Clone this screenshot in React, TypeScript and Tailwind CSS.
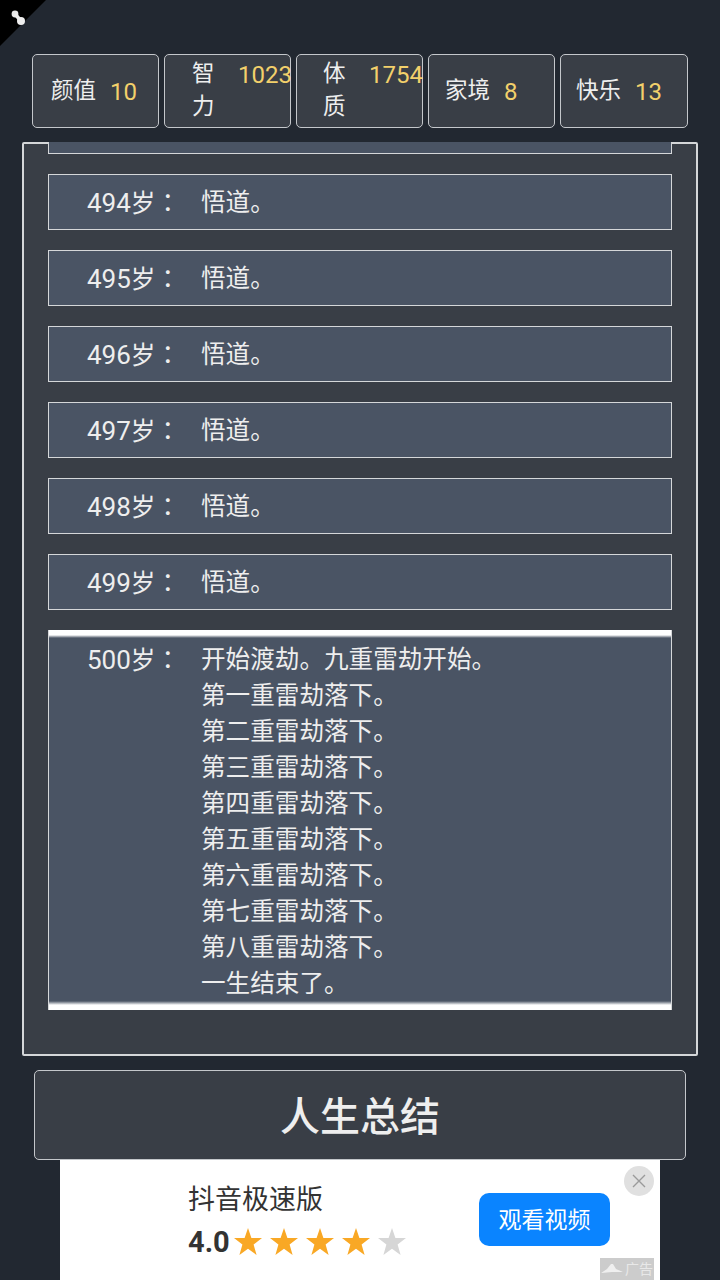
const font = { fontFamily: '"Roboto", "Noto Sans CJK SC", sans-serif' };

const stats = [
  { label: "颜值", value: "10", box: "pl-[18px] w-[127px]", labelCls: "w-[45px]", gap: "ml-[14px]" },
  { label: "智力", value: "1023", box: "pl-[27px] w-[127px]", labelCls: "w-[24px]", gap: "ml-[22px]" },
  { label: "体质", value: "1754", box: "pl-[26px] w-[127px]", labelCls: "w-[24px]", gap: "ml-[22px]" },
  { label: "家境", value: "8", box: "pl-[16px] w-[127px]", labelCls: "w-[45px]", gap: "ml-[14px]" },
  { label: "快乐", value: "13", box: "pl-[15px] w-[128px]", labelCls: "w-[45px]", gap: "ml-[14px]" },
];

const ages = [494, 495, 496, 497, 498, 499];

const lastLines = [
  "开始渡劫。九重雷劫开始。",
  "第一重雷劫落下。",
  "第二重雷劫落下。",
  "第三重雷劫落下。",
  "第四重雷劫落下。",
  "第五重雷劫落下。",
  "第六重雷劫落下。",
  "第七重雷劫落下。",
  "第八重雷劫落下。",
  "一生结束了。",
];

function Age({ age }: { age: number }) {
  return (
    <span className="ml-[38px] w-[114px] shrink-0 text-[24.6px]">
      <span className="text-[26px]">{age}</span>岁
      <span className="font-['Noto_Sans_CJK_TC']">：</span>
    </span>
  );
}

function Star({ on }: { on: boolean }) {
  return (
    <svg viewBox="0 0 28 27" className="h-[27px] w-[28px] shrink-0">
      <polygon
        points="14,0 17.4,9.9 28,10.1 19.6,16.6 22.6,27 14,20.8 5.4,27 8.4,16.6 0,10.1 10.6,9.9"
        fill={on ? "#f9a825" : "#d6d6d6"}
      />
    </svg>
  );
}

export default function App() {
  return (
    <div style={font} className="relative flex h-[1280px] w-[720px] flex-col overflow-hidden bg-[#222831] text-[#eeeeee]">
      {/* corner badge */}
      <div className="absolute left-0 top-0">
        <svg width="46" height="46" viewBox="0 0 46 46">
          <polygon points="0,0 46,0 0,46" fill="#000000" />
          <circle cx="15" cy="14" r="3.4" fill="#e8e8e8" />
          <circle cx="21" cy="21" r="4" fill="#eeeeee" />
          <line x1="15" y1="14" x2="21" y2="21" stroke="#eeeeee" strokeWidth="3.5" />
        </svg>
      </div>

      <div className="ml-[32px] mt-[54px] flex h-[74px] gap-[5px]">
        {stats.map((s) => (
          <div
            key={s.label}
            className={`flex items-center rounded-[5px] border border-[#c4c7cb] bg-[#393e46] ${s.box}`}
          >
            <div className="mb-[2px] flex items-baseline">
              <span className={`text-[22.5px] leading-[33px] ${s.labelCls}`}>{s.label}</span>
              <span className={`translate-y-[2px] text-[24px] leading-[33px] text-[#f2d06b] ${s.gap}`}>{s.value}</span>
            </div>
          </div>
        ))}
      </div>

      <div className="ml-[22px] mt-[14px] h-[914px] w-[676px] rounded-[2px] border-2 border-[#d5d7d9] bg-[#393e46] px-[24px]">
        <div className="-mt-[2px] h-[12px] border-x border-b border-[#d5d7d9] bg-[#4a5464]" />
        <div className="mt-[20px] flex flex-col gap-[20px]">
          {ages.map((age) => (
            <div key={age} className="flex h-[56px] items-center border border-[#d5d7d9] bg-[#4a5464] pt-[2px]">
              <Age age={age} />
              <span className="text-[24.6px]">悟道。</span>
            </div>
          ))}
          <div className="flex h-[380px] border-x border-[#d5d7d9] bg-[linear-gradient(to_bottom,#ffffff_0,#ffffff_5px,#4a5464_8px,#4a5464_calc(100%-9px),#ffffff_calc(100%-5px),#ffffff_100%)] pt-[10px] leading-[36px]">
            <Age age={500} />
            <div className="mt-[2px] flex flex-col text-[24.6px]">
              {lastLines.map((line, i) => (
                <span key={i}>{line}</span>
              ))}
            </div>
          </div>
        </div>
      </div>

      <div className="ml-[34px] mt-[14px] flex h-[90px] w-[652px] items-center justify-center rounded-[5px] border border-[#c4c7cb] bg-[#393e46] pt-[5px] text-[40px] font-medium">
        人生总结
      </div>

      {/* ad */}
      <div className="relative ml-[60px] flex h-[120px] w-[600px] bg-white">
        <div className="ml-[128px] mt-[22px] flex w-[291px] flex-col">
          <span className="text-[27px] leading-[36px] text-[#333333]">抖音极速版</span>
          <div className="mt-[4px] flex items-center">
            <span className="w-[46px] text-[29px] font-bold leading-[40px] text-[#333333]">4.0</span>
            <div className="-mt-[2px] flex gap-[8px]">
              <Star on />
              <Star on />
              <Star on />
              <Star on />
              <Star on={false} />
            </div>
          </div>
        </div>
        <div className="mt-[33px] flex h-[53px] w-[131px] items-center justify-center rounded-[10px] bg-[#0a84ff] pt-[3px] text-[23px] text-white">
          观看视频
        </div>
        <div className="absolute right-[6px] top-[6px] flex h-[30px] w-[30px] items-center justify-center rounded-full bg-[#e0e0e0]">
          <svg width="16" height="16" viewBox="0 0 16 16">
            <path d="M2 2 L14 14 M14 2 L2 14" stroke="#9a9a9a" strokeWidth="1.4" fill="none" />
          </svg>
        </div>
        <div className="absolute bottom-0 right-[6px] flex h-[22px] w-[54px] items-center justify-center gap-[2px] bg-[#cccccc] text-[14px] leading-none text-[#e8e8e8]">
          <svg width="22" height="12" viewBox="0 0 22 12">
            <path d="M0 10 L6 6 L10 1 L12 1 L15 6 L22 9 L11 9 Z" fill="#efefef" />
          </svg>
          <span>广告</span>
        </div>
      </div>
    </div>
  );
}
